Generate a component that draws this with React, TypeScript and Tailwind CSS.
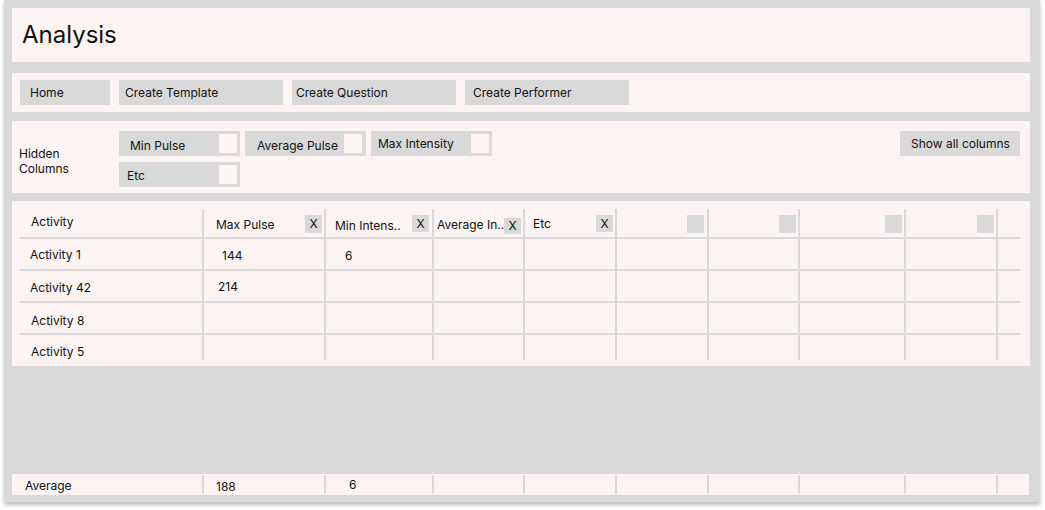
const font = { fontFamily: "Inter, 'Noto Sans', Arial, sans-serif" };

const colW = [
  "w-[184px]",
  "w-[122px]",
  "w-[108px]",
  "w-[91px]",
  "w-[92px]",
  "w-[92px]",
  "w-[91px]",
  "w-[106px]",
  "w-[92px]",
  "w-[22px]",
];

const navItems = [
  { label: "Home", cls: "w-[90px] pl-[10px]" },
  { label: "Create Template", cls: "w-[164px] pl-[6px]" },
  { label: "Create Question", cls: "w-[164px] pl-[4px]" },
  { label: "Create Performer", cls: "w-[164px] pl-[8px]" },
];

// header cells: label + the small "X" / empty box on the right
const headerCells = [
  { label: "Activity", text: "pl-[11px] mt-[5px]", box: null, boxCls: "" },
  { label: "Max Pulse", text: "pl-[12px] mt-[8px]", box: "X", boxCls: "mr-[2px] mt-[6px] h-[18px]" },
  { label: "Min Intens..", text: "pl-[9px] mt-[9px]", box: "X", boxCls: "mr-[3px] mt-[6px] h-[17px]" },
  { label: "Average In..", text: "pl-[3px] mt-[8px]", box: "X", boxCls: "mr-[2px] mt-[9px] h-[16px]" },
  { label: "Etc", text: "pl-[8px] mt-[7px]", box: "X", boxCls: "mr-[2px] mt-[6px] h-[17px]" },
  { label: "", text: "", box: "", boxCls: "mr-[3px] mt-[6px] h-[18px]" },
  { label: "", text: "", box: "", boxCls: "mr-[2px] mt-[6px] h-[18px]" },
  { label: "", text: "", box: "", boxCls: "mr-[2px] mt-[6px] h-[18px]" },
  { label: "", text: "", box: "", boxCls: "mr-[2px] mt-[6px] h-[18px]" },
  { label: "", text: "", box: null, boxCls: "" },
];

const rows = [
  {
    h: "h-[32px] border-b-2",
    cells: [
      { v: "Activity 1", cls: "pl-[10px] pt-[8px]" },
      { v: "144", cls: "pl-[18px] pt-[9px]" },
      { v: "6", cls: "pl-[19px] pt-[9px]" },
    ],
  },
  {
    h: "h-[32px] border-b-2",
    cells: [
      { v: "Activity 42", cls: "pl-[10px] pt-[9px]" },
      { v: "214", cls: "pl-[14px] pt-[8px]" },
    ],
  },
  {
    h: "h-[32px] border-b-2",
    cells: [{ v: "Activity 8", cls: "pl-[11px] pt-[10px]" }],
  },
  {
    h: "h-[25px]",
    cells: [{ v: "Activity 5", cls: "pl-[11px] pt-[9px]" }],
  },
];

function Chip({ label, textCls, boxCls }: { label: string; textCls: string; boxCls?: string }) {
  return (
    <div className="flex h-[25px] w-[121px] bg-[#d9d9d9]">
      <span className={`flex-1 text-[12px] leading-4 ${textCls}`}>{label}</span>
      <div className={`mr-[3px] mt-[3px] h-[19px] w-[18px] bg-[#fcf3f3] ${boxCls ?? ""}`} />
    </div>
  );
}

function TableHeader() {
  return (
    <div className="flex h-[30px] w-[1000px] border-b-2 border-[#d9d9d9]">
      {headerCells.map((c, i) => (
        <div
          key={i}
          className={`flex shrink-0 ${colW[i]} ${i < 9 ? "border-r-2 border-[#d9d9d9]" : ""}`}
        >
          <span className={`flex-1 text-[12px] leading-4 whitespace-nowrap ${c.text}`}>{c.label}</span>
          {c.box !== null && (
            <div
              className={`flex w-[17px] items-center justify-center bg-[#d9d9d9] text-[12px] leading-4 ${c.boxCls}`}
            >
              {c.box}
            </div>
          )}
        </div>
      ))}
    </div>
  );
}

function TableRow({ row }: { row: (typeof rows)[number] }) {
  return (
    <div className={`flex w-[1000px] border-[#d9d9d9] ${row.h}`}>
      {colW.map((w, i) => {
        const cell = row.cells[i];
        return (
          <div
            key={i}
            className={`shrink-0 text-[12px] leading-4 ${w} ${i < 9 ? "border-r-2 border-[#d9d9d9]" : ""} ${cell ? cell.cls : ""}`}
          >
            {cell?.v}
          </div>
        );
      })}
    </div>
  );
}

function AverageRow() {
  const vals = [
    { v: "Average", cls: "pl-[13px] pt-[4px]", w: "w-[192px]" },
    { v: "188", cls: "pl-[12px] pt-[5px]", w: colW[1] },
    { v: "6", cls: "pl-[23px] pt-[3px]", w: colW[2] },
  ];
  const rest = ["w-[91px]", "w-[92px]", "w-[92px]", "w-[91px]", "w-[106px]", "w-[92px]"];
  return (
    <div className="mr-[1px] flex h-[21px] bg-[#fcf3f3]">
      {vals.map((c, i) => (
        <div key={i} className={`flex shrink-0 ${c.w}`}>
          <span className={`flex-1 text-[12px] leading-4 ${c.cls}`}>{c.v}</span>
          <div className="my-[1px] w-[2px] bg-[#d9d9d9]" />
        </div>
      ))}
      {rest.map((w, i) => (
        <div key={i} className={`flex shrink-0 justify-end ${w}`}>
          <div className="my-[1px] w-[2px] bg-[#d9d9d9]" />
        </div>
      ))}
    </div>
  );
}

export default function App() {
  return (
    <div className="h-[510px] w-[1045px] bg-white text-[#111]" style={font}>
      <div className="ml-[4px] flex h-[502px] w-[1036px] flex-col bg-[#d9d9d9] pl-[8px] pr-[10px] pt-[8px] shadow-[0_3px_4px_rgba(0,0,0,0.25)]">
        {/* title */}
        <div className="flex h-[54px] items-center bg-[#fcf3f3] pl-[10px]">
          <h1 className="text-[24px] leading-none">Analysis</h1>
        </div>

        {/* nav */}
        <div className="mt-[11px] flex h-[39px] items-center gap-[9px] bg-[#fcf3f3] pl-[8px]">
          {navItems.map((n) => (
            <button
              key={n.label}
              type="button"
              className={`flex h-[25px] items-center bg-[#d9d9d9] text-left text-[12px] ${n.cls}`}
            >
              {n.label}
            </button>
          ))}
        </div>

        {/* hidden columns */}
        <div className="mt-[9px] flex h-[72px] bg-[#fcf3f3] pl-[7px] pt-[10px]">
          <div className="w-[100px] pt-[15px] text-[12px] leading-[15px]">
            Hidden
            <br />
            Columns
          </div>
          <div className="flex flex-col gap-[6px]">
            <div className="flex gap-[5px]">
              <Chip label="Min Pulse" textCls="pl-[11px] pt-[7px]" />
              <Chip label="Average Pulse" textCls="pl-[12px] pt-[7px]" boxCls="mr-[4px]" />
              <Chip label="Max Intensity" textCls="pl-[7px] pt-[5px]" boxCls="mr-[3px]" />
            </div>
            <Chip label="Etc" textCls="pl-[8px] pt-[6px]" />
          </div>
          <button
            type="button"
            className="ml-auto mr-[10px] h-[25px] w-[120px] bg-[#d9d9d9] pl-[11px] text-left text-[12px]"
          >
            Show all columns
          </button>
        </div>

        {/* table */}
        <div className="mt-[8px] h-[165px] bg-[#fcf3f3] pl-[8px] pt-[8px]">
          <TableHeader />
          {rows.map((r, i) => (
            <TableRow key={i} row={r} />
          ))}
        </div>

        <div className="flex-1" />

        {/* footer averages */}
        <div className="mb-[7px]">
          <AverageRow />
        </div>
      </div>
    </div>
  );
}
